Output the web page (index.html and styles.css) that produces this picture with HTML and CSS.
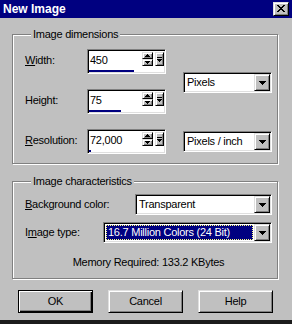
FILE: index.html
```html
<!DOCTYPE html>
<html>
<head>
<meta charset="utf-8">
<link rel="stylesheet" href="styles.css">
</head>
<body>
<div class="window">
  <div class="titlebar">
    <span class="title">New Image</span>
    <span class="close raised">
      <svg width="8" height="7" viewBox="0 0 8 7"><path d="M0 0h2v1h1v1h2V1h1V0h2v1H7v1H6v1H5v1h1v1h1v1h1v1H6V6H5V5H3v1H2v1H0V6h1V5h1V4h1V3H2V2H1V1H0z" fill="#000"/></svg>
    </span>
  </div>
  <div class="main">
    <div class="group dims">
      <div class="legend">Image dimensions</div>
      <div class="dims-grid">
        <div class="lbl"><u>W</u>idth:</div>
        <div class="spin">
          <div class="spin-row">
            <span class="spin-val">450</span>
            <span class="arrows">
              <span class="sbtn raised"><svg width="5" height="3"><path d="M2 0h1v1h1v1h1v1H0V2h1V1h1z"/></svg></span>
              <span class="sbtn raised"><svg width="5" height="3"><path d="M0 0h5v1H4v1H3v1H2V2H1V1H0z"/></svg></span>
            </span>
            <span class="popbtn raised"><svg width="5" height="5"><path d="M0 0h5v1H0zM0 2h5v1H4v1H3v1H2V4H1V3H0z"/></svg></span>
          </div>
          <div class="spin-bar"><span class="bar-fill" style="width:60%"></span></div>
        </div>
        <div class="combo units">
          <span class="combo-text">Pixels</span>
          <span class="combo-btn raised"><svg width="7" height="4"><path d="M0 0h7v1H6v1H5v1H4v1H3V3H2V2H1V1H0z"/></svg></span>
        </div>

        <div class="lbl">Height:</div>
        <div class="spin">
          <div class="spin-row">
            <span class="spin-val">75</span>
            <span class="arrows">
              <span class="sbtn raised"><svg width="5" height="3"><path d="M2 0h1v1h1v1h1v1H0V2h1V1h1z"/></svg></span>
              <span class="sbtn raised"><svg width="5" height="3"><path d="M0 0h5v1H4v1H3v1H2V2H1V1H0z"/></svg></span>
            </span>
            <span class="popbtn raised"><svg width="5" height="5"><path d="M0 0h5v1H0zM0 2h5v1H4v1H3v1H2V4H1V3H0z"/></svg></span>
          </div>
          <div class="spin-bar"><span class="bar-fill" style="width:43%"></span></div>
        </div>

        <div class="lbl"><u>R</u>esolution:</div>
        <div class="spin">
          <div class="spin-row">
            <span class="spin-val">72,000</span>
            <span class="arrows">
              <span class="sbtn raised"><svg width="5" height="3"><path d="M2 0h1v1h1v1h1v1H0V2h1V1h1z"/></svg></span>
              <span class="sbtn raised"><svg width="5" height="3"><path d="M0 0h5v1H4v1H3v1H2V2H1V1H0z"/></svg></span>
            </span>
            <span class="popbtn raised"><svg width="5" height="5"><path d="M0 0h5v1H0zM0 2h5v1H4v1H3v1H2V4H1V3H0z"/></svg></span>
          </div>
          <div class="spin-bar"><span class="bar-fill" style="width:3%"></span></div>
        </div>
        <div class="combo res-units">
          <span class="combo-text">Pixels / inch</span>
          <span class="combo-btn raised"><svg width="7" height="4"><path d="M0 0h7v1H6v1H5v1H4v1H3V3H2V2H1V1H0z"/></svg></span>
        </div>
      </div>
    </div>

    <div class="group chars">
      <div class="legend">Image characteristics</div>
      <div class="row row1">
        <div class="lbl"><u>B</u>ackground color:</div>
        <div class="combo bg">
          <span class="combo-text">Transparent</span>
          <span class="combo-btn raised"><svg width="7" height="4"><path d="M0 0h7v1H6v1H5v1H4v1H3V3H2V2H1V1H0z"/></svg></span>
        </div>
      </div>
      <div class="row row2">
        <div class="lbl">I<u>m</u>age type:</div>
        <div class="combo type">
          <span class="combo-text"><span class="sel">16.7 Million Colors (24 Bit)</span></span>
          <span class="combo-btn raised"><svg width="7" height="4"><path d="M0 0h7v1H6v1H5v1H4v1H3V3H2V2H1V1H0z"/></svg></span>
        </div>
      </div>
      <div class="memory">Memory Required: 133.2 KBytes</div>
    </div>

    <div class="buttons">
      <div class="btn default">OK</div>
      <div class="btn raised">Cancel</div>
      <div class="btn raised">Help</div>
    </div>
  </div>
</div>
</body>
</html>
```
FILE: styles.css
```css
html, body {
  margin: 0;
  padding: 0;
  background: #c0c0c0;
}

.window {
  width: 292px;
  height: 324px;
  box-sizing: border-box;
  background: #c0c0c0;
  font: 11px/13px "Liberation Sans", Arial, sans-serif;
  letter-spacing: -0.25px;
  color: #000;
  border-bottom: 4px solid #1c1c1c;
  display: flex;
  flex-direction: column;
  overflow: hidden;
}

.raised {
  background: #c0c0c0;
  box-sizing: border-box;
  border: 1px solid;
  border-color: #dfdfdf #000 #000 #dfdfdf;
  box-shadow: inset 1px 1px 0 #fff, inset -1px -1px 0 #808080;
}

svg { display: block; fill: #000; }

.titlebar {
  flex: none;
  height: 18px;
  background: #000080;
  display: flex;
  align-items: center;
  justify-content: space-between;
  padding: 0 3px 0 3px;
}

.title {
  color: #fff;
  font-weight: bold;
  font-size: 12px;
  letter-spacing: 0;
}

.close {
  width: 16px;
  height: 14px;
  display: flex;
  align-items: center;
  justify-content: center;
  padding-bottom: 1px;
}

.main {
  padding: 16px 14px 0 12px;
}

.group {
  border: 1px solid #808080;
  box-shadow: 1px 1px 0 #fff, inset 1px 1px 0 #fff;
}

.legend {
  display: block;
  width: fit-content;
  margin: -7px 0 0 6px;
  padding: 0 2px;
  background: #c0c0c0;
  line-height: 13px;
}

.dims {
  padding: 0 0 9px 12px;
}

.dims-grid {
  margin-top: 8px;
  display: grid;
  grid-template-columns: 62px 79px 17px 89px;
  grid-template-rows: 25px 25px 25px;
  row-gap: 15px;
}

.lbl {
  align-self: center;
  white-space: nowrap;
}

.dims-grid .lbl {
  grid-column: 1;
  padding-bottom: 3px;
}

.spin {
  grid-column: 2;
  height: 25px;
  box-sizing: border-box;
  border: 1px solid;
  border-color: #808080 #fff #fff #808080;
  box-shadow: inset 1px 1px 0 #000, inset -1px -1px 0 #dfdfdf;
  background: #fff;
  padding: 1px;
  display: flex;
  flex-direction: column;
}

.spin-row {
  height: 18px;
  display: flex;
  align-items: flex-start;
}

.spin-val {
  flex: 1;
  padding-left: 1px;
  align-self: center;
}

.arrows {
  width: 11px;
  height: 14px;
  margin-top: 1px;
  margin-right: 2px;
  display: flex;
  flex-direction: column;
}

.sbtn {
  height: 7px;
  display: flex;
  align-items: center;
  justify-content: center;
}

.popbtn {
  width: 9px;
  height: 14px;
  margin-top: 1px;
  display: flex;
  align-items: center;
  justify-content: center;
}

.spin-bar {
  margin-top: 1px;
  height: 2px;
}

.bar-fill {
  display: block;
  height: 2px;
  background: #000080;
}

.combo {
  height: 21px;
  box-sizing: border-box;
  border: 1px solid;
  border-color: #808080 #fff #fff #808080;
  box-shadow: inset 1px 1px 0 #000, inset -1px -1px 0 #dfdfdf;
  background: #fff;
  padding: 1px;
  display: flex;
}

.combo-text {
  flex: 1;
  display: flex;
  align-items: center;
  padding-left: 2px;
  white-space: nowrap;
}

.combo-btn {
  width: 16px;
  display: flex;
  align-items: center;
  justify-content: center;
}

.units {
  grid-column: 4;
  grid-row: 1 / 3;
  align-self: start;
  margin-top: 23px;
}

.res-units {
  grid-column: 4;
  grid-row: 3;
  align-self: center;
}

.chars {
  margin-top: 17px;
  padding: 0 5px 9px 12px;
}

.row {
  display: flex;
  align-items: center;
  justify-content: space-between;
}

.row1 { margin-top: 6px; }
.row2 { margin-top: 7px; }

.combo.bg { width: 137px; }
.combo.type { width: 169px; }

.type .combo-text {
  padding: 1px;
}

.sel {
  flex: 1;
  align-self: stretch;
  display: flex;
  align-items: center;
  box-sizing: border-box;
  background: #000080;
  color: #fff;
  border: 1px dotted #ffff7f;
  padding-left: 1px;
}

.memory {
  margin-top: 13px;
  text-align: center;
  line-height: 13px;
}

.buttons {
  margin-top: 11px;
  padding-left: 6px;
  display: flex;
  gap: 15px;
}

.btn {
  width: 75px;
  height: 23px;
  box-sizing: border-box;
  display: flex;
  align-items: center;
  justify-content: center;
}

.btn.default {
  background: #c0c0c0;
  border: 1px solid #000;
  box-shadow: inset 1px 1px 0 #fff, inset -1px -1px 0 #000, inset -2px -2px 0 #808080;
}
```
